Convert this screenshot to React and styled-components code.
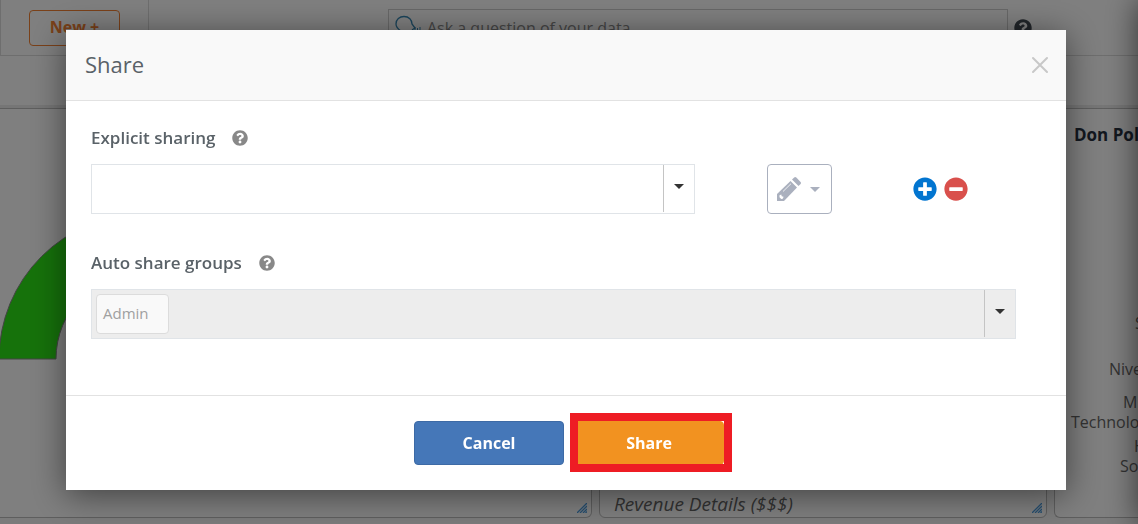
import React from 'react';
import styled, { createGlobalStyle } from 'styled-components';
import { FaPlusCircle, FaMinusCircle, FaQuestionCircle } from 'react-icons/fa';

const labels = [
  { text: 'S', x: 80, y: 220 },
  { text: 'Nive', x: 54, y: 266 },
  { text: 'M', x: 68, y: 299 },
  { text: 'Technolo', x: 16, y: 319 },
  { text: 'H', x: 79, y: 343 },
  { text: 'So', x: 65, y: 363 },
];

function Combo({ id, tags = [], disabled }) {
  return (
    <ComboBox $disabled={disabled}>
      {tags.map((tag) => (
        <Tag key={tag}>{tag}</Tag>
      ))}
      <ComboInput id={id} type="text" disabled={disabled} />
      <ComboToggle type="button" aria-label="Show options" disabled={disabled}>
        <Caret />
      </ComboToggle>
    </ComboBox>
  );
}

function PencilIcon() {
  return (
    <svg width="26" height="26" viewBox="0 0 26 26" fill="currentColor" aria-hidden="true">
      <path d="M1 25V18L14.500 5L21 11.500L8 25Z" />
      <path d="M16 3.500L18.200 1.500Q19.200 0.700 20.300 1.600L24.600 5.900Q25.500 7 24.600 8L22.500 10Z" />
      <path d="M3.500 19.300L5.300 18.500L5.700 20.300L7.600 20.800L6.800 22.800L5.200 23L3.500 21.300Z" fill="#fff" />
      <path d="M7 15.500L15 7.700" stroke="#fff" strokeWidth="0.800" />
    </svg>
  );
}

function AskIcon() {
  return (
    <svg width="28" height="26" viewBox="0 0 28 26" fill="none" aria-hidden="true">
      <path
        d="M6 20V16C3 14 1 12 1 9C1 4.500 4.500 1.500 9 1.500C14 1.500 17 5 17 9L20 13L17.500 14.500V18H12V22"
        stroke="#3688b5"
        strokeWidth="1.300"
      />
      <path d="M20 12V18M22.500 13V18M25 12V18" stroke="#3688b5" strokeWidth="1" />
    </svg>
  );
}

function ResizeGrip() {
  return (
    <Grip width="10" height="10" viewBox="0 0 10 10" aria-hidden="true">
      <path d="M0 10L10 0M3 10L10 3M6 10L10 6M8.500 10L10 8.500" stroke="#4a9ce0" strokeWidth="1.300" />
    </Grip>
  );
}

function Dashboard() {
  return (
    <Page>
      <TopBar>
        <NewCell>
          <NewButton type="button">New +</NewButton>
        </NewCell>
        <SearchArea>
          <SearchBox>
            <AskIcon />
            <SearchInput
              type="text"
              aria-label="Ask a question of your data"
              placeholder="Ask a question of your data"
            />
          </SearchBox>
          <FaQuestionCircle size={18} />
        </SearchArea>
      </TopBar>
      <SubBar />
      <Board>
        <Card $first>
          <svg width="300" height="260" viewBox="0 0 300 260" aria-hidden="true">
            <path
              d="M-1 250A145 145 0 0 1 289 250H232A88 88 0 0 0 56 250Z"
              fill="#2ce416"
              stroke="#888"
              strokeWidth="1"
            />
          </svg>
          <ResizeGrip />
        </Card>
        <Card>
          <CardCaption>Revenue Details ($$$)</CardCaption>
          <ResizeGrip />
        </Card>
        <Card $last>
          <CardTitle>Don Pol</CardTitle>
          <ChartLabels aria-hidden="true">
            {labels.map((label) => (
              <text key={label.text} x={label.x} y={label.y}>
                {label.text}
              </text>
            ))}
          </ChartLabels>
        </Card>
      </Board>
      <SidePanel />
    </Page>
  );
}

function ShareDialog() {
  return (
    <Overlay>
      <Dialog role="dialog" aria-labelledby="share-title">
        <DialogHeader>
          <DialogTitle id="share-title">Share</DialogTitle>
          <CloseButton type="button" aria-label="Close">
            <svg width="18" height="18" viewBox="0 0 18 18" aria-hidden="true">
              <path
                d="M2 2L16 16M16 2L2 16"
                stroke="#c8c8c8"
                strokeWidth="2"
                strokeLinecap="round"
              />
            </svg>
          </CloseButton>
        </DialogHeader>
        <DialogBody>
          <Field>
            <LabelRow>
              <Label htmlFor="explicit">Explicit sharing</Label>
              <FaQuestionCircle size={16} />
            </LabelRow>
            <ShareRow>
              <Combo id="explicit" />
              <PermissionButton type="button" aria-label="Permission">
                <PencilIcon />
                <Caret />
              </PermissionButton>
              <RowActions>
                <IconButton type="button" aria-label="Add" $color="#0275d0">
                  <FaPlusCircle size={24} />
                </IconButton>
                <IconButton type="button" aria-label="Remove" $color="#d9504c">
                  <FaMinusCircle size={24} />
                </IconButton>
              </RowActions>
            </ShareRow>
          </Field>
          <Field>
            <LabelRow>
              <Label htmlFor="groups">Auto share groups</Label>
              <FaQuestionCircle size={16} />
            </LabelRow>
            <Combo id="groups" tags={['Admin']} disabled />
          </Field>
        </DialogBody>
        <DialogFooter>
          <FooterButton type="button" $color="#4577b8" $border="#3d6aa5">
            Cancel
          </FooterButton>
          <Highlight>
            <FooterButton type="button" $color="#f29220" $border="#f29220">
              Share
            </FooterButton>
          </Highlight>
        </DialogFooter>
      </Dialog>
    </Overlay>
  );
}

function App() {
  return (
    <>
      <GlobalStyle />
      <Dashboard />
      <ShareDialog />
    </>
  );
}

const GlobalStyle = createGlobalStyle`
  * {
    box-sizing: border-box;
  }

  body {
    margin: 0;
    overflow: hidden;
    font-family: 'Open Sans', 'Noto Sans', sans-serif;
    color: #5a6268;
  }

  button,
  input {
    font-family: inherit;
  }
`;

const Page = styled.div`
  display: flex;
  flex-direction: column;
  height: 100vh;
  background-color: #f6f6f6;
`;

const TopBar = styled.header`
  display: flex;
  height: 56px;
  background-color: #fff;
  border-bottom: 1px solid #dcdcdc;
`;

const NewCell = styled.div`
  width: 149px;
  padding: 10px 28px;
  border-left: 1px solid #dcdcdc;
  border-right: 1px solid #dcdcdc;
`;

const NewButton = styled.button`
  width: 91px;
  height: 36px;
  padding: 0 0 2px;
  border: 1px solid #f58233;
  border-radius: 4px;
  background: none;
  color: #f58233;
  font-size: 16px;
  font-weight: 700;
`;

const SearchArea = styled.div`
  flex: 1;
  display: flex;
  justify-content: flex-end;
  align-items: center;
  gap: 6px;
  padding-right: 106px;
  color: #444c54;
`;

const SearchBox = styled.div`
  display: flex;
  align-items: center;
  flex: 0 1 620px;
  height: 37px;
  padding-left: 6px;
  gap: 4px;
  border: 1px solid #d0d0d0;
`;

const SearchInput = styled.input`
  flex: 1;
  border: 0;
  padding: 0;
  background: none;
  font-size: 16px;

  &::placeholder {
    color: #8a8a8a;
    opacity: 1;
  }
`;

const SubBar = styled.div`
  height: 52px;
  background-color: #fff;
  border-bottom: 3px solid #ececec;
`;

const Board = styled.main`
  flex: 1;
  display: grid;
  grid-template-columns: minmax(0, 1fr) 448px 84px;
  gap: 7px;
  padding-bottom: 6px;
`;

const Card = styled.section`
  position: relative;
  display: flex;
  flex-direction: column;
  overflow: hidden;
  background-color: #fff;
  border: 1px solid #bcbcbc;
  border-left-width: ${({ $first }) => ($first ? '0' : '1px')};
  border-right-width: ${({ $last }) => ($last ? '0' : '1px')};
  border-radius: ${({ $first, $last }) => {
    if ($first) return '0 0 6px 0';
    return $last ? '0 0 0 6px' : '0 0 6px 6px';
  }};
`;

const CardTitle = styled.h2`
  margin: 14px 0 0 19px;
  font-size: 17px;
  line-height: 24px;
  font-weight: 700;
  white-space: nowrap;
  color: #26303e;
`;

const CardCaption = styled.p`
  margin: auto 0 0 14px;
  font-size: 19px;
  line-height: 26px;
  font-style: italic;
  color: #666;
`;

const ChartLabels = styled.svg`
  position: absolute;
  inset: 0;
  width: 100%;
  height: 100%;
  font-size: 16px;
  fill: #666;
`;

const Grip = styled.svg`
  position: absolute;
  right: 4px;
  bottom: 4px;
`;

const SidePanel = styled.aside`
  position: fixed;
  top: 0;
  bottom: 0;
  left: 100%;
  width: 300px;
  box-shadow: 0 0 30px rgba(0, 0, 0, 0.6);
`;

const Overlay = styled.div`
  position: fixed;
  inset: 0;
  padding: 30px 6px 30px 0;
  background-color: rgba(0, 0, 0, 0.5);
`;

const Dialog = styled.div`
  max-width: 1000px;
  margin: 0 auto;
  background-color: #fff;
  box-shadow: 0 5px 32px rgba(0, 0, 0, 0.5);
`;

const DialogHeader = styled.div`
  display: flex;
  justify-content: space-between;
  align-items: center;
  height: 71px;
  padding: 0 17px 0 19px;
  background-color: #f9f9f9;
  border-bottom: 1px solid #e2e2e2;
`;

const DialogTitle = styled.h1`
  margin: 0;
  font-size: 22px;
  line-height: 30px;
  padding-bottom: 2px;
  font-weight: 400;
`;

const CloseButton = styled.button`
  display: flex;
  padding: 0;
  border: 0;
  background: none;
`;

const DialogBody = styled.div`
  display: flex;
  flex-direction: column;
  gap: 36px;
  padding: 24px 50px 56px 25px;
`;

const Field = styled.div`
  display: flex;
  flex-direction: column;
  gap: 12px;
`;

const LabelRow = styled.div`
  display: flex;
  align-items: center;
  gap: 17px;
  height: 27px;
  padding-bottom: 1px;

  svg {
    color: #888;
  }
`;

const Label = styled.label`
  font-size: 17px;
  line-height: 26px;
  font-weight: 600;
`;

const ShareRow = styled.div`
  display: flex;
  align-items: center;
`;

const ComboBox = styled.div`
  flex: 1;
  display: flex;
  align-items: center;
  height: 50px;
  min-height: 50px;
  border: 1px solid #e0e4e8;
  background-color: ${({ $disabled }) => ($disabled ? '#ededed' : '#fff')};
`;

const Tag = styled.span`
  width: 73px;
  height: 40px;
  margin-left: 4px;
  padding-left: 6px;
  border: 1px solid #dcdcdc;
  border-radius: 4px;
  background-color: #f9f9f9;
  color: #a0a0a0;
  font-size: 15px;
  line-height: 37px;
`;

const ComboInput = styled.input`
  flex: 1;
  min-width: 0;
  height: 100%;
  padding: 0 12px;
  border: 0;
  background: none;
  font-size: 16px;
`;

const ComboToggle = styled.button`
  display: flex;
  justify-content: center;
  align-items: center;
  align-self: flex-start;
  width: 31px;
  height: 47px;
  padding: 0 0 4px;
  border: 0;
  border-left: 1px solid #c4c4c4;
  background: none;
  color: #333;
`;

const Caret = styled.span`
  border: 5px solid transparent;
  border-top-color: currentColor;
  border-bottom: 0;
`;

const PermissionButton = styled.button`
  display: flex;
  align-items: center;
  gap: 8px;
  width: 65px;
  height: 50px;
  margin-left: 72px;
  padding: 0 8px;
  border: 1px solid #aab0be;
  border-radius: 4px;
  background: none;
  color: #aab0be;
`;

const RowActions = styled.div`
  display: flex;
  gap: 7px;
  margin-left: 81px;
  padding-right: 48px;
`;

const IconButton = styled.button`
  display: flex;
  padding: 0;
  border: 0;
  background: none;
  color: ${({ $color }) => $color};
`;

const DialogFooter = styled.div`
  display: flex;
  justify-content: center;
  gap: 10px;
  padding: 25px 19px 25px 25px;
  border-top: 1px solid #e2e2e2;
`;

const FooterButton = styled.button`
  width: 150px;
  height: 44px;
  border: 1px solid ${({ $border }) => $border};
  border-radius: 4px;
  background-color: ${({ $color }) => $color};
  color: #fff;
  font-size: 16px;
  font-weight: 700;
`;

const Highlight = styled.div`
  position: relative;

  &::after {
    content: '';
    position: absolute;
    inset: -8px -8px -7px -4px;
    border: 8px solid #ee1c24;
    pointer-events: none;
  }
`;

export default App;
